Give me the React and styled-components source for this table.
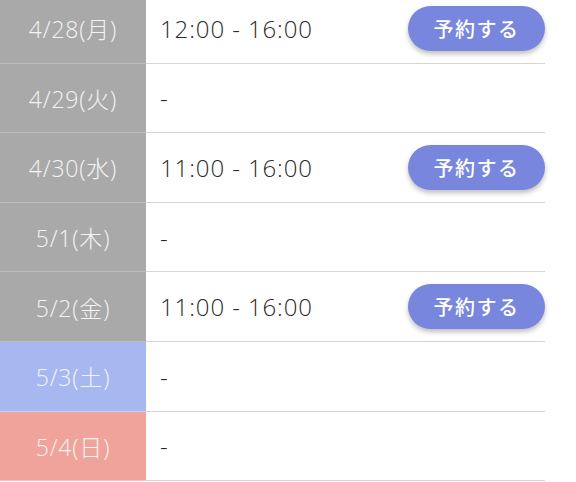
import React from "react";
import styled, { createGlobalStyle } from "styled-components";

const Global = createGlobalStyle`
  html, body {
    margin: 0;
    padding: 0;
    background: #fff;
    overflow: hidden;
  }
  body {
    font-family: "Open Sans", "Noto Sans CJK JP", sans-serif;
  }
`;

const Table = styled.div`
  width: 545px;
  margin-top: -6px;
  display: flex;
  flex-direction: column;
`;

const Row = styled.div`
  display: flex;
  height: 69.6px;
`;

const colors = {
  weekday: "#a9a9a9",
  sat: "#a7b8f1",
  sun: "#f0a39a",
};

const DateCell = styled.div`
  width: 146px;
  flex-shrink: 0;
  display: flex;
  align-items: center;
  justify-content: center;
  background: ${(p) => colors[p.$kind]};
  color: #f4f4f4;
  font-size: 23px;
  font-weight: 300;
  letter-spacing: 0.8px;
  box-sizing: border-box;
  border-bottom: 1.5px solid ${(p) => (p.$kind === "weekday" ? "#bdbdbd" : "rgba(255,255,255,0.35)")};
`;

const TimeCell = styled.div`
  flex: 1;
  display: flex;
  align-items: center;
  justify-content: space-between;
  padding-left: 12px;
  box-sizing: border-box;
  border-bottom: 1.5px solid #d5d5d5;
`;

const TimeText = styled.span`
  font-size: 24px;
  color: #2b2b2b;
  font-weight: 300;
  letter-spacing: 0.9px;
  padding-left: 2px;
`;

const Button = styled.button`
  width: 137px;
  height: 45px;
  border: none;
  border-radius: 23px;
  background: #7886dd;
  color: #fff;
  font-family: "Noto Sans CJK JP", sans-serif;
  font-size: 20px;
  font-weight: 500;
  letter-spacing: 1.5px;
  box-shadow: 0 3px 5px rgba(0, 0, 0, 0.25);
  cursor: pointer;
`;

const days = [
  { date: "4/28(月)", time: "12:00 - 16:00", kind: "weekday" },
  { date: "4/29(火)", time: null, kind: "weekday" },
  { date: "4/30(水)", time: "11:00 - 16:00", kind: "weekday" },
  { date: "5/1(木)", time: null, kind: "weekday" },
  { date: "5/2(金)", time: "11:00 - 16:00", kind: "weekday" },
  { date: "5/3(土)", time: null, kind: "sat" },
  { date: "5/4(日)", time: null, kind: "sun" },
];

export default function App() {
  return (
    <>
      <Global />
      <Table>
        {days.map((d) => (
          <Row key={d.date}>
            <DateCell $kind={d.kind}>{d.date}</DateCell>
            <TimeCell>
              <TimeText>{d.time || "-"}</TimeText>
              {d.time && <Button>予約する</Button>}
            </TimeCell>
          </Row>
        ))}
      </Table>
    </>
  );
}
